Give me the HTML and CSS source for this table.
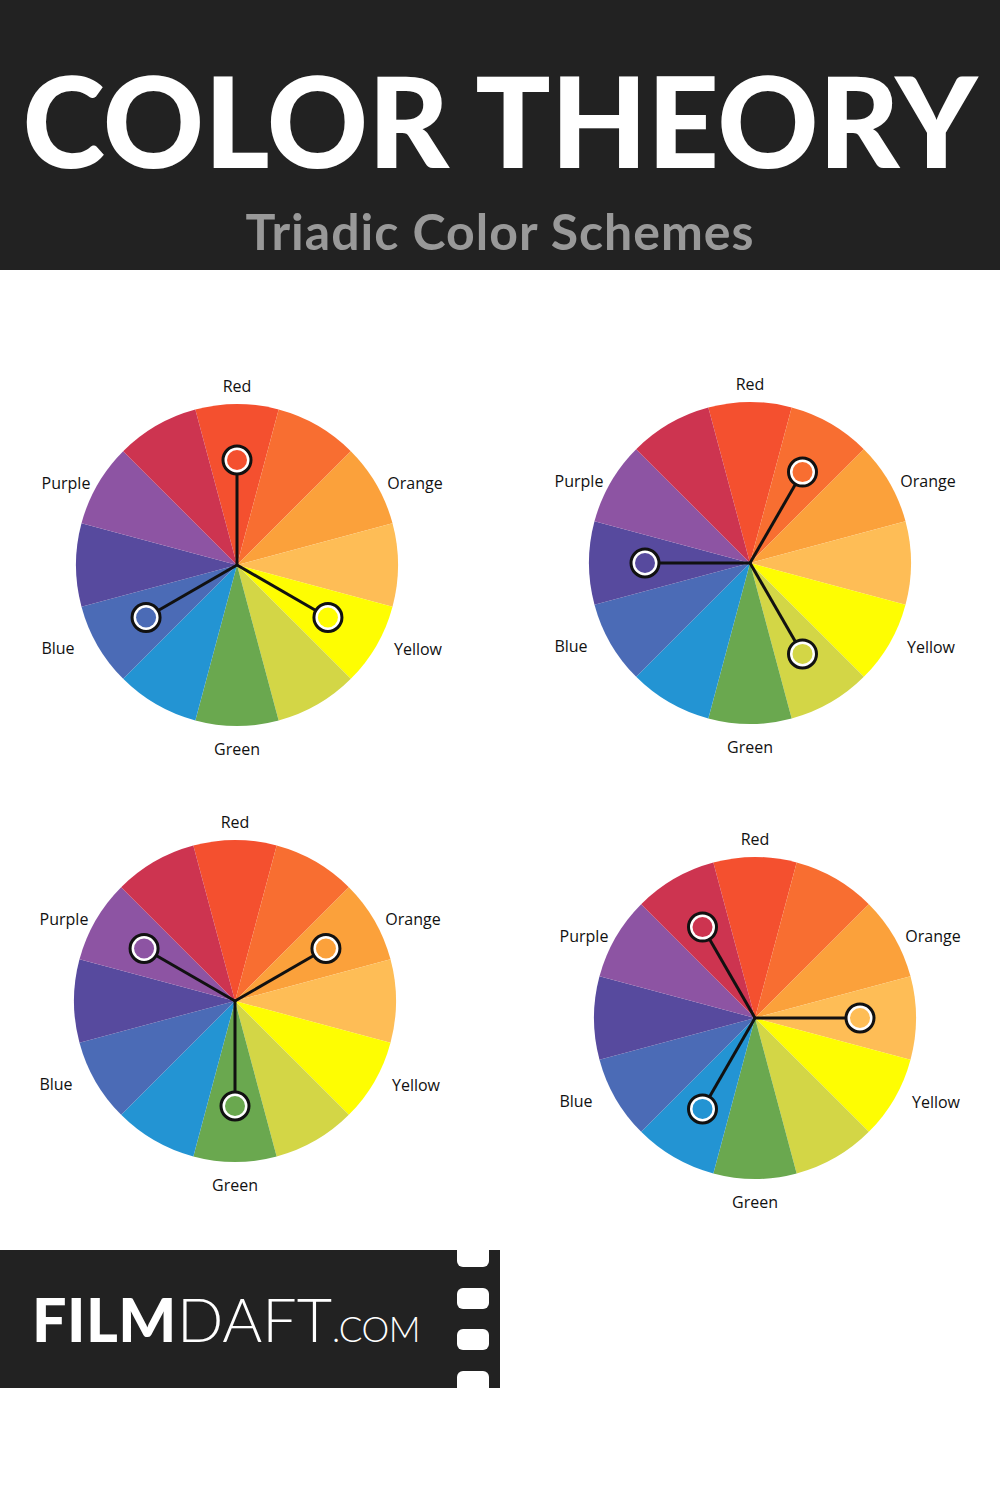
FILE: index.html
```html
<!DOCTYPE html>
<html lang="en">
<head>
<meta charset="utf-8">
<title>Color Theory – Triadic Color Schemes</title>
<link rel="stylesheet" href="styles.css">
</head>
<body>
<header class="hero">
  <h1 class="title">COLOR THEORY</h1>
  <p class="subtitle">Triadic Color Schemes</p>
</header>

<svg class="defs" width="0" height="0" aria-hidden="true">
  <defs>
    <g id="wheel">
      <path fill="#f4502f" d="M210 200 L168.33 44.49 A161 161 0 0 1 251.67 44.49 Z"/>
      <path fill="#f86e31" d="M210 200 L251.67 44.49 A161 161 0 0 1 323.84 86.16 Z"/>
      <path fill="#fba13b" d="M210 200 L323.84 86.16 A161 161 0 0 1 365.51 158.33 Z"/>
      <path fill="#febd56" d="M210 200 L365.51 158.33 A161 161 0 0 1 365.51 241.67 Z"/>
      <path fill="#fefd02" d="M210 200 L365.51 241.67 A161 161 0 0 1 323.84 313.84 Z"/>
      <path fill="#d3d646" d="M210 200 L323.84 313.84 A161 161 0 0 1 251.67 355.51 Z"/>
      <path fill="#6aa84f" d="M210 200 L251.67 355.51 A161 161 0 0 1 168.33 355.51 Z"/>
      <path fill="#2394d3" d="M210 200 L168.33 355.51 A161 161 0 0 1 96.16 313.84 Z"/>
      <path fill="#4b6bb6" d="M210 200 L96.16 313.84 A161 161 0 0 1 54.49 241.67 Z"/>
      <path fill="#574a9e" d="M210 200 L54.49 241.67 A161 161 0 0 1 54.49 158.33 Z"/>
      <path fill="#8d54a3" d="M210 200 L54.49 158.33 A161 161 0 0 1 96.16 86.16 Z"/>
      <path fill="#cd3450" d="M210 200 L96.16 86.16 A161 161 0 0 1 168.33 44.49 Z"/>
      <text class="lbl" x="210" y="27">Red</text>
      <text class="lbl" x="388" y="124">Orange</text>
      <text class="lbl" x="391" y="290">Yellow</text>
      <text class="lbl" x="210" y="390">Green</text>
      <text class="lbl" x="31" y="289">Blue</text>
      <text class="lbl" x="39" y="124">Purple</text>
    </g>
  </defs>
</svg>

<main class="wheels">
  <svg class="wheel w1" viewBox="0 0 420 400" width="420" height="400" role="img" aria-label="Triadic scheme: red, yellow, blue">
    <use href="#wheel"/>
    <g class="links">
      <line x1="210" y1="200" x2="210" y2="95"/>
      <line x1="210" y1="200" x2="300.93" y2="252.5"/>
      <line x1="210" y1="200" x2="119.07" y2="252.5"/>
    </g>
    <g class="dot"><circle class="ring" cx="210" cy="95" r="14"/><circle cx="210" cy="95" r="10" fill="#f4502f"/></g>
    <g class="dot"><circle class="ring" cx="300.93" cy="252.5" r="14"/><circle cx="300.93" cy="252.5" r="10" fill="#fefd02"/></g>
    <g class="dot"><circle class="ring" cx="119.07" cy="252.5" r="14"/><circle cx="119.07" cy="252.5" r="10" fill="#4b6bb6"/></g>
  </svg>

  <svg class="wheel w2" viewBox="0 0 420 400" width="420" height="400" role="img" aria-label="Triadic scheme: red-orange, yellow-green, blue-violet">
    <use href="#wheel"/>
    <g class="links">
      <line x1="210" y1="200" x2="262.5" y2="109.07"/>
      <line x1="210" y1="200" x2="262.5" y2="290.93"/>
      <line x1="210" y1="200" x2="105" y2="200"/>
    </g>
    <g class="dot"><circle class="ring" cx="262.5" cy="109.07" r="14"/><circle cx="262.5" cy="109.07" r="10" fill="#f86e31"/></g>
    <g class="dot"><circle class="ring" cx="262.5" cy="290.93" r="14"/><circle cx="262.5" cy="290.93" r="10" fill="#d3d646"/></g>
    <g class="dot"><circle class="ring" cx="105" cy="200" r="14"/><circle cx="105" cy="200" r="10" fill="#574a9e"/></g>
  </svg>

  <svg class="wheel w3" viewBox="0 0 420 400" width="420" height="400" role="img" aria-label="Triadic scheme: orange, green, purple">
    <use href="#wheel"/>
    <g class="links">
      <line x1="210" y1="200" x2="300.93" y2="147.5"/>
      <line x1="210" y1="200" x2="210" y2="305"/>
      <line x1="210" y1="200" x2="119.07" y2="147.5"/>
    </g>
    <g class="dot"><circle class="ring" cx="300.93" cy="147.5" r="14"/><circle cx="300.93" cy="147.5" r="10" fill="#fba13b"/></g>
    <g class="dot"><circle class="ring" cx="210" cy="305" r="14"/><circle cx="210" cy="305" r="10" fill="#6aa84f"/></g>
    <g class="dot"><circle class="ring" cx="119.07" cy="147.5" r="14"/><circle cx="119.07" cy="147.5" r="10" fill="#8d54a3"/></g>
  </svg>

  <svg class="wheel w4" viewBox="0 0 420 400" width="420" height="400" role="img" aria-label="Triadic scheme: yellow-orange, blue, red-violet">
    <use href="#wheel"/>
    <g class="links">
      <line x1="210" y1="200" x2="315" y2="200"/>
      <line x1="210" y1="200" x2="157.5" y2="290.93"/>
      <line x1="210" y1="200" x2="157.5" y2="109.07"/>
    </g>
    <g class="dot"><circle class="ring" cx="315" cy="200" r="14"/><circle cx="315" cy="200" r="10" fill="#febd56"/></g>
    <g class="dot"><circle class="ring" cx="157.5" cy="290.93" r="14"/><circle cx="157.5" cy="290.93" r="10" fill="#2394d3"/></g>
    <g class="dot"><circle class="ring" cx="157.5" cy="109.07" r="14"/><circle cx="157.5" cy="109.07" r="10" fill="#cd3450"/></g>
  </svg>
</main>

<footer class="brand">
  <div class="logo">
    <span class="bold">FILM</span><span class="thin">DAFT</span><span class="dotcom">.COM</span>
  </div>
  <div class="strip" aria-hidden="true">
    <span class="hole notch-top"></span>
    <span class="hole"></span>
    <span class="hole"></span>
    <span class="hole notch-bottom"></span>
  </div>
</footer>
</body>
</html>
```

FILE: styles.css
```css
html, body {
  margin: 0;
  padding: 0;
  background: #ffffff;
}

body {
  width: 1000px;
  height: 1500px;
  font-family: "Lato", "Open Sans", sans-serif;
  overflow: hidden;
}

.hero {
  background: #222222;
  height: 270px;
  box-sizing: border-box;
  padding-top: 50px;
  text-align: center;
}

.title {
  margin: 0;
  color: #ffffff;
  font-family: "Lato", sans-serif;
  font-weight: 900;
  font-size: 125px;
  line-height: 140px;
  letter-spacing: 0;
  white-space: nowrap;
}

.subtitle {
  margin: 0;
  padding-top: 14px;
  color: #999999;
  font-family: "Lato", sans-serif;
  font-weight: 700;
  font-size: 50px;
  line-height: 54px;
  letter-spacing: 1px;
}

.defs {
  position: absolute;
  width: 0;
  height: 0;
}

.lbl {
  font-family: "Open Sans", "Lato", sans-serif;
  font-size: 16px;
  fill: #111111;
  text-anchor: middle;
}

.links line {
  stroke: #111111;
  stroke-width: 3;
}

.ring {
  fill: #ffffff;
  stroke: #111111;
  stroke-width: 3;
}

.wheels {
  display: grid;
  grid-template-columns: 500px 500px;
  align-items: start;
  padding-top: 93px;
}

.wheel {
  display: block;
}

.w1 { margin: 2px 0 0 27px; }
.w2 { margin: 0 0 0 40px; }
.w3 { margin: 36px 0 0 25px; }
.w4 { margin: 53px 0 0 45px; }

.brand {
  margin-top: 32px;
  width: 500px;
  height: 138px;
  background: #222222;
  display: flex;
}

.logo {
  flex: 1;
  padding: 39px 0 0 32px;
  color: #ffffff;
  font-family: "Lato", sans-serif;
  white-space: nowrap;
  line-height: 60px;
}

.bold {
  font-weight: 900;
  font-size: 61px;
  letter-spacing: 0.5px;
}

.thin {
  font-weight: 300;
  font-size: 61px;
}

.dotcom {
  font-weight: 300;
  font-size: 35px;
  letter-spacing: -0.5px;
}

.strip {
  width: 32px;
  margin-right: 11px;
  display: flex;
  flex-direction: column;
  justify-content: space-between;
}

.hole {
  display: block;
  height: 21px;
  background: #ffffff;
  border-radius: 6px;
}

.notch-top {
  height: 17px;
  border-radius: 0 0 6px 6px;
}

.notch-bottom {
  height: 17px;
  border-radius: 6px 6px 0 0;
}
```
